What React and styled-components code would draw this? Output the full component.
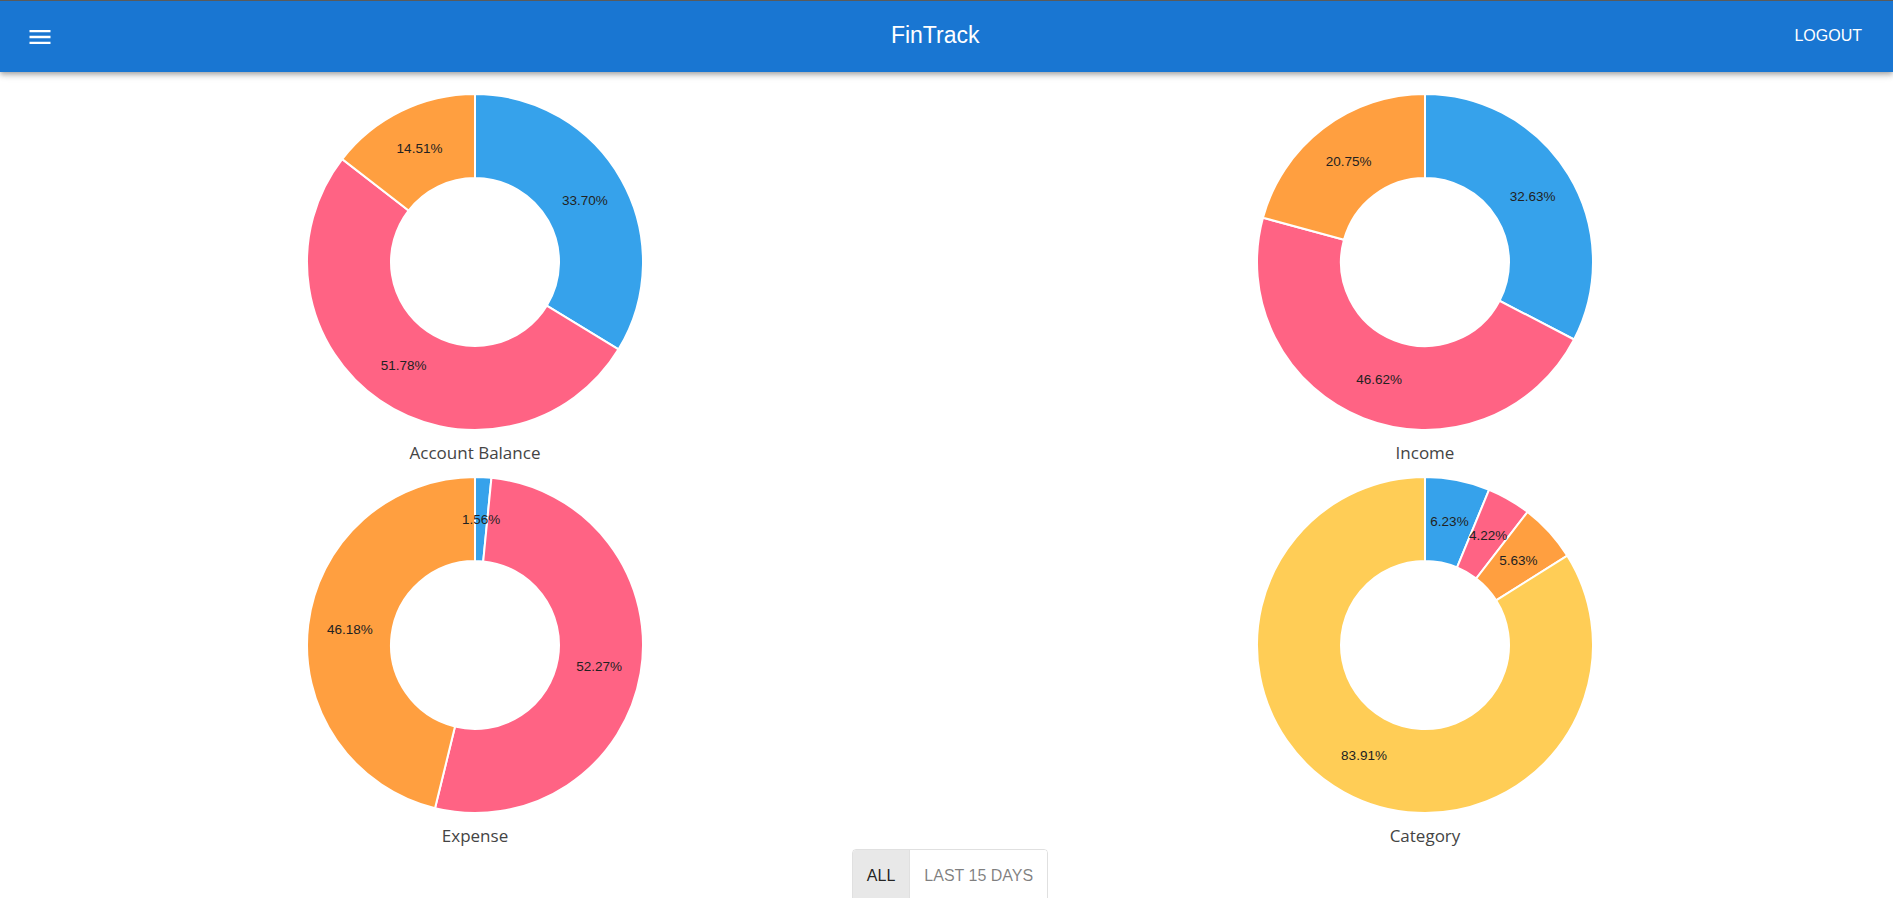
import React from "react";
import styled, { createGlobalStyle } from "styled-components";

const GlobalStyle = createGlobalStyle`
  html, body {
    margin: 0;
    padding: 0;
    background: #ffffff;
    overflow: hidden;
    font-family: "Liberation Sans", Arial, sans-serif;
  }
  * { box-sizing: border-box; }
`;

const AppBar = styled.header`
  height: 72px;
  background: #1976d2;
  border-top: 1px solid #5a5a5a;
  color: #ffffff;
  box-shadow: 0px 2px 4px -1px rgba(0, 0, 0, 0.2),
    0px 4px 5px 0px rgba(0, 0, 0, 0.14), 0px 1px 10px 0px rgba(0, 0, 0, 0.12);
  position: relative;
  z-index: 2;
`;

const Toolbar = styled.div`
  height: 100%;
  display: flex;
  align-items: center;
  padding: 0 21px 0 16px;
`;

const MenuButton = styled.button`
  display: flex;
  align-items: center;
  justify-content: center;
  padding: 10px;
  margin-right: 22px;
  border: none;
  background: transparent;
  color: #ffffff;
  border-radius: 50%;
  cursor: pointer;
  svg {
    display: block;
    width: 28px;
    height: 28px;
  }
`;

const Title = styled.h1`
  flex: 1;
  margin: 0 0 3px 0;
  text-align: center;
  font-family: "Liberation Sans", Arial, sans-serif;
  font-size: 23px;
  font-weight: 400;
  line-height: normal;
`;

const LogoutButton = styled.button`
  padding: 6px 10px;
  border: none;
  background: transparent;
  color: #ffffff;
  font-family: "Liberation Sans", Arial, sans-serif;
  font-size: 16px;
  text-transform: uppercase;
  cursor: pointer;
  margin-bottom: 1px;
`;

const Main = styled.main`
  width: 1900px;
  padding-top: 22px;
  display: flex;
  flex-direction: column;
  align-items: center;
`;

const ChartGrid = styled.div`
  width: 100%;
  display: grid;
  grid-template-columns: 950px 950px;
  row-gap: 12px;
`;

const ChartCell = styled.section`
  display: flex;
  flex-direction: column;
  align-items: center;
`;

const DonutSvg = styled.svg`
  display: block;
  width: 336px;
  height: 336px;
`;

const SliceLabel = styled.text`
  font-family: "Liberation Sans", Arial, sans-serif;
  font-size: 13.5px;
  fill: #222222;
`;

const ChartTitle = styled.div`
  margin-top: 11px;
  font-family: "Open Sans", "Noto Sans", sans-serif;
  font-size: 17px;
  font-weight: 400;
  line-height: 24px;
  color: #444444;
`;

const ToggleGroup = styled.div`
  margin-top: 1px;
  display: inline-flex;
  border: 1px solid rgba(0, 0, 0, 0.12);
  border-radius: 4px;
  overflow: hidden;
`;

const ToggleButton = styled.button`
  padding: 12px 14px;
  border: none;
  border-left: ${(p) => (p.$first ? "none" : "1px solid rgba(0, 0, 0, 0.12)")};
  background: ${(p) => (p.$selected ? "#e8e8e8" : "#ffffff")};
  color: ${(p) => (p.$selected ? "rgba(0,0,0,0.87)" : "rgba(0,0,0,0.5)")};
  font-family: "Liberation Sans", Arial, sans-serif;
  font-size: 16px;
  line-height: 28px;
  text-transform: uppercase;
  cursor: pointer;
`;

const COLORS = {
  blue: "#36a2eb",
  pink: "#ff6384",
  orange: "#ff9f40",
  yellow: "#ffcd56",
};

const charts = [
  {
    title: "Account Balance",
    data: [
      { v: 33.7, c: COLORS.blue },
      { v: 51.78, c: COLORS.pink },
      { v: 14.51, c: COLORS.orange },
    ],
  },
  {
    title: "Income",
    data: [
      { v: 32.63, c: COLORS.blue },
      { v: 46.62, c: COLORS.pink },
      { v: 20.75, c: COLORS.orange },
    ],
  },
  {
    title: "Expense",
    data: [
      { v: 1.56, c: COLORS.blue },
      { v: 52.27, c: COLORS.pink },
      { v: 46.18, c: COLORS.orange },
    ],
  },
  {
    title: "Category",
    data: [
      { v: 6.23, c: COLORS.blue },
      { v: 4.22, c: COLORS.pink },
      { v: 5.63, c: COLORS.orange },
      { v: 83.91, c: COLORS.yellow },
    ],
  },
];

const C = 168;
const R_OUT = 168;
const R_IN = 84;
const R_LABEL = 126;

function pt(r, a) {
  return [C + r * Math.sin(a), C - r * Math.cos(a)];
}

function arcPath(a0, a1) {
  const large = a1 - a0 > Math.PI ? 1 : 0;
  const [x0, y0] = pt(R_OUT, a0);
  const [x1, y1] = pt(R_OUT, a1);
  const [x2, y2] = pt(R_IN, a1);
  const [x3, y3] = pt(R_IN, a0);
  return `M${x0} ${y0} A${R_OUT} ${R_OUT} 0 ${large} 1 ${x1} ${y1} L${x2} ${y2} A${R_IN} ${R_IN} 0 ${large} 0 ${x3} ${y3} Z`;
}

function Donut({ data }) {
  const total = data.reduce((s, d) => s + d.v, 0);
  let acc = 0;
  const slices = data.map((d) => {
    const a0 = (acc / total) * Math.PI * 2;
    acc += d.v;
    const a1 = (acc / total) * Math.PI * 2;
    const mid = (a0 + a1) / 2;
    const [lx, ly] = pt(R_LABEL, mid);
    return { ...d, a0, a1, lx, ly };
  });
  return (
    <DonutSvg viewBox="0 0 336 336">
      {slices.map((s, i) => (
        <path key={i} d={arcPath(s.a0, s.a1)} fill={s.c} stroke="#ffffff" strokeWidth="2" strokeLinejoin="miter" />
      ))}
      {slices.map((s, i) => (
        <SliceLabel key={"l" + i} x={s.lx} y={s.ly} textAnchor="middle" dominantBaseline="central">
          {s.v.toFixed(2)}%
        </SliceLabel>
      ))}
    </DonutSvg>
  );
}

export default function App() {
  return (
    <>
      <GlobalStyle />
      <AppBar>
        <Toolbar>
          <MenuButton aria-label="menu">
            <svg viewBox="0 0 24 24" fill="currentColor">
              <path d="M3 18h18v-2H3zm0-5h18v-2H3zm0-7v2h18V6z" />
            </svg>
          </MenuButton>
          <Title>FinTrack</Title>
          <LogoutButton>Logout</LogoutButton>
        </Toolbar>
      </AppBar>
      <Main>
        <ChartGrid>
          {charts.map((c) => (
            <ChartCell key={c.title}>
              <Donut data={c.data} />
              <ChartTitle>{c.title}</ChartTitle>
            </ChartCell>
          ))}
        </ChartGrid>
        <ToggleGroup>
          <ToggleButton $first $selected>All</ToggleButton>
          <ToggleButton>Last 15 days</ToggleButton>
        </ToggleGroup>
      </Main>
    </>
  );
}
